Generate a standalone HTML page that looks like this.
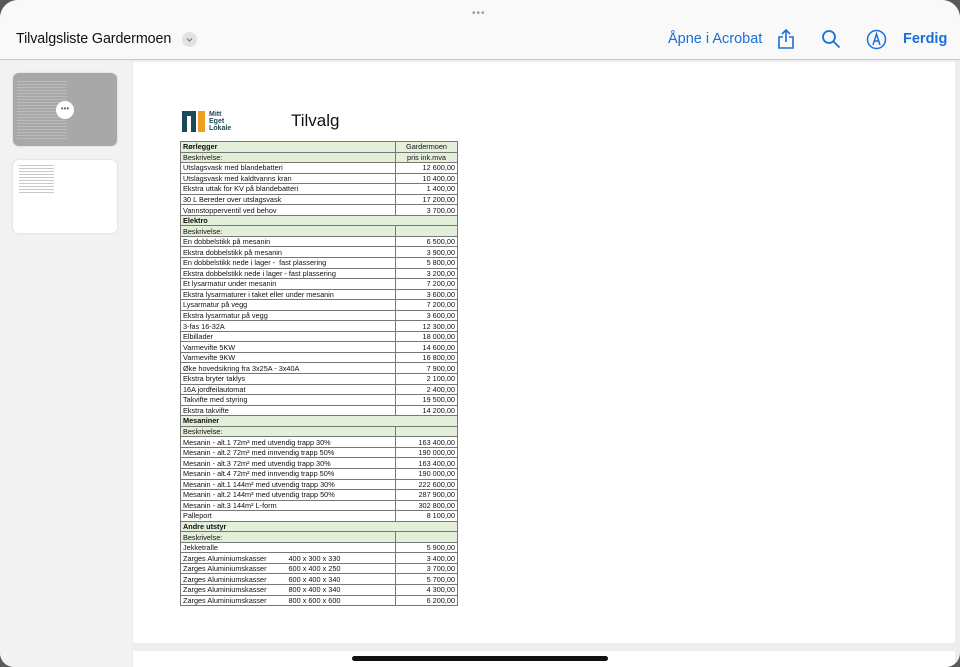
<!DOCTYPE html>
<html><head><meta charset="utf-8"><style>
*{margin:0;padding:0;box-sizing:border-box}
body{width:960px;height:667px;overflow:hidden;background:#5a5a5a;font-family:"Liberation Sans",sans-serif;position:relative}
.frame{position:absolute;left:0;top:0;width:960px;height:667px;background:#ededed;border-radius:18px 18px 14px 14px;overflow:hidden}
.top{position:absolute;left:0;top:0;width:960px;height:60px;background:#f9f9f9;border-bottom:1px solid #c8c8c8}
.dots{position:absolute;left:472px;top:8px;font-size:10px;color:#999;letter-spacing:1px}
.title{position:absolute;left:16px;top:31px;font-size:14.3px;color:#111;letter-spacing:-0.1px}
.chev{position:absolute;left:182px;top:32px;width:15px;height:15px;border-radius:50%;background:#e2e2e2}
.blue{color:#1a6fd8;position:absolute;top:31px;font-size:14.5px}
.side{position:absolute;left:0;top:61px;width:132px;height:606px;background:#f2f2f2}
.th{position:absolute;left:13px;width:104px;height:73px;border-radius:6px;background:#fff;box-shadow:0 0 2px #ccc;overflow:hidden}
.page{position:absolute;left:133px;top:62px;width:822px;height:581px;background:#fff}
.page2{position:absolute;left:133px;top:651px;width:822px;height:20px;background:#fff}
table{position:absolute;left:180px;top:141px;border-collapse:collapse;font-size:7.3px;color:#111}
tr{height:10.56px}
td{border:1px solid #777;height:10.56px;padding:0 2px;line-height:9px;white-space:nowrap}
td.r{text-align:right}
tr.g td{background:#e3efd9}
td.a{width:215px}td.b{width:62px}
.home{position:absolute;left:352px;top:656px;width:256px;height:5px;border-radius:3px;background:#111}
.lines{position:absolute;background:repeating-linear-gradient(#c8c8c8 0 1px,transparent 1px 3px)}
</style></head><body><div class="frame">
<div class="top">
<div class="dots">•••</div>
<div class="title">Tilvalgsliste Gardermoen</div>
<div class="chev"><svg width="15" height="15"><path d="M5 6.5l2.5 2.5 2.5-2.5" stroke="#777" fill="none" stroke-width="1.2"/></svg></div>
<div class="blue" style="left:668px">Åpne i Acrobat</div>
<svg style="position:absolute;left:776px;top:28px" width="20" height="22" fill="none" stroke="#1a6fd8" stroke-width="1.6"><path d="M10 2v12M6 6l4-4 4 4M7 9H3v11h14V9h-4"/></svg>
<svg style="position:absolute;left:821px;top:29px" width="20" height="20" fill="none" stroke="#1a6fd8" stroke-width="1.8"><circle cx="8" cy="8" r="6"/><path d="M12.5 12.5l6 6"/></svg>
<svg style="position:absolute;left:866px;top:29px" width="21" height="21" fill="none" stroke="#1a6fd8" stroke-width="1.5"><circle cx="10.5" cy="10.5" r="9"/><path d="M7 16l3.5-11 3.5 11M8.5 12h4"/></svg>
<div class="blue" style="left:903px;font-weight:bold">Ferdig</div>
</div>
<div class="side">
<div class="th" style="top:12px;background:#a8a8a8"><div class="lines" style="left:4px;top:8px;width:50px;height:60px;opacity:.6"></div><div style="position:absolute;left:43px;top:28px;width:18px;height:18px;border-radius:50%;background:#fff;font-size:8px;text-align:center;line-height:15px;color:#666">•••</div></div>
<div class="th" style="top:99px"><div class="lines" style="left:6px;top:5px;width:35px;height:30px"></div></div>
</div>
<div class="page">
<svg style="position:absolute;left:49px;top:49px" width="24" height="21"><path d="M0 0h14v21h-5V5H5v16H0z" fill="#1d4a5a"/><path d="M16 0h7v21h-7z" fill="#f0a020"/></svg>
<div style="position:absolute;left:76px;top:49px;font-size:7px;font-weight:bold;color:#1d4a5a;line-height:7px">Mitt<br>Eget<br>Lokale</div>
<div style="position:absolute;left:158px;top:49px;font-size:17px;color:#111">Tilvalg</div>
</div>
<table>
<tr class="g"><td class="a"><b>Rørlegger</b></td><td class="b" style="text-align:center">Gardermoen</td></tr>
<tr class="g"><td class="a">Beskrivelse:</td><td class="b" style="text-align:center">pris ink.mva</td></tr>
<tr><td>Utslagsvask med blandebatteri</td><td class="r">12 600,00</td></tr>
<tr><td>Utslagsvask med kaldtvanns kran</td><td class="r">10 400,00</td></tr>
<tr><td>Ekstra uttak for KV på blandebatteri</td><td class="r">1 400,00</td></tr>
<tr><td>30 L Bereder over utslagsvask</td><td class="r">17 200,00</td></tr>
<tr><td>Vannstopperventil ved behov</td><td class="r">3 700,00</td></tr>
<tr class="g"><td colspan="2"><b>Elektro</b></td></tr>
<tr class="g"><td>Beskrivelse:</td><td></td></tr>
<tr><td>En dobbelstikk på mesanin</td><td class="r">6 500,00</td></tr>
<tr><td>Ekstra dobbelstikk på mesanin</td><td class="r">3 900,00</td></tr>
<tr><td>En dobbelstikk nede i lager -&nbsp; fast plassering</td><td class="r">5 800,00</td></tr>
<tr><td>Ekstra dobbelstikk nede i lager - fast plassering</td><td class="r">3 200,00</td></tr>
<tr><td>Et lysarmatur under mesanin</td><td class="r">7 200,00</td></tr>
<tr><td>Ekstra lysarmaturer i taket eller under mesanin</td><td class="r">3 600,00</td></tr>
<tr><td>Lysarmatur på vegg</td><td class="r">7 200,00</td></tr>
<tr><td>Ekstra lysarmatur på vegg</td><td class="r">3 600,00</td></tr>
<tr><td>3-fas 16-32A</td><td class="r">12 300,00</td></tr>
<tr><td>Elbillader</td><td class="r">18 000,00</td></tr>
<tr><td>Varmevifte 5KW</td><td class="r">14 600,00</td></tr>
<tr><td>Varmevifte 9KW</td><td class="r">16 800,00</td></tr>
<tr><td>Øke hovedsikring fra 3x25A - 3x40A</td><td class="r">7 900,00</td></tr>
<tr><td>Ekstra bryter taklys</td><td class="r">2 100,00</td></tr>
<tr><td>16A jordfeilautomat</td><td class="r">2 400,00</td></tr>
<tr><td>Takvifte med styring</td><td class="r">19 500,00</td></tr>
<tr><td>Ekstra takvifte</td><td class="r">14 200,00</td></tr>
<tr class="g"><td colspan="2"><b>Mesaniner</b></td></tr>
<tr class="g"><td>Beskrivelse:</td><td></td></tr>
<tr><td>Mesanin - alt.1 72m² med utvendig trapp 30%</td><td class="r">163 400,00</td></tr>
<tr><td>Mesanin - alt.2 72m² med innvendig trapp 50%</td><td class="r">190 000,00</td></tr>
<tr><td>Mesanin - alt.3 72m² med utvendig trapp 30%</td><td class="r">163 400,00</td></tr>
<tr><td>Mesanin - alt.4 72m² med innvendig trapp 50%</td><td class="r">190 000,00</td></tr>
<tr><td>Mesanin - alt.1 144m² med utvendig trapp 30%</td><td class="r">222 600,00</td></tr>
<tr><td>Mesanin - alt.2 144m² med utvendig trapp 50%</td><td class="r">287 900,00</td></tr>
<tr><td>Mesanin - alt.3 144m² L-form</td><td class="r">302 800,00</td></tr>
<tr><td>Palleport</td><td class="r">8 100,00</td></tr>
<tr class="g"><td colspan="2"><b>Andre utstyr</b></td></tr>
<tr class="g"><td>Beskrivelse:</td><td></td></tr>
<tr><td>Jekketralle</td><td class="r">5 900,00</td></tr>
<tr><td>Zarges Aluminiumskasser<span style="position:absolute;left:108px">400 x 300 x 330</span></td><td class="r">3 400,00</td></tr>
<tr><td>Zarges Aluminiumskasser<span style="position:absolute;left:108px">600 x 400 x 250</span></td><td class="r">3 700,00</td></tr>
<tr><td>Zarges Aluminiumskasser<span style="position:absolute;left:108px">600 x 400 x 340</span></td><td class="r">5 700,00</td></tr>
<tr><td>Zarges Aluminiumskasser<span style="position:absolute;left:108px">800 x 400 x 340</span></td><td class="r">4 300,00</td></tr>
<tr><td>Zarges Aluminiumskasser<span style="position:absolute;left:108px">800 x 600 x 600</span></td><td class="r">6 200,00</td></tr>
</table>
<div class="page2"></div>
<div class="home"></div>
</div></body></html>
